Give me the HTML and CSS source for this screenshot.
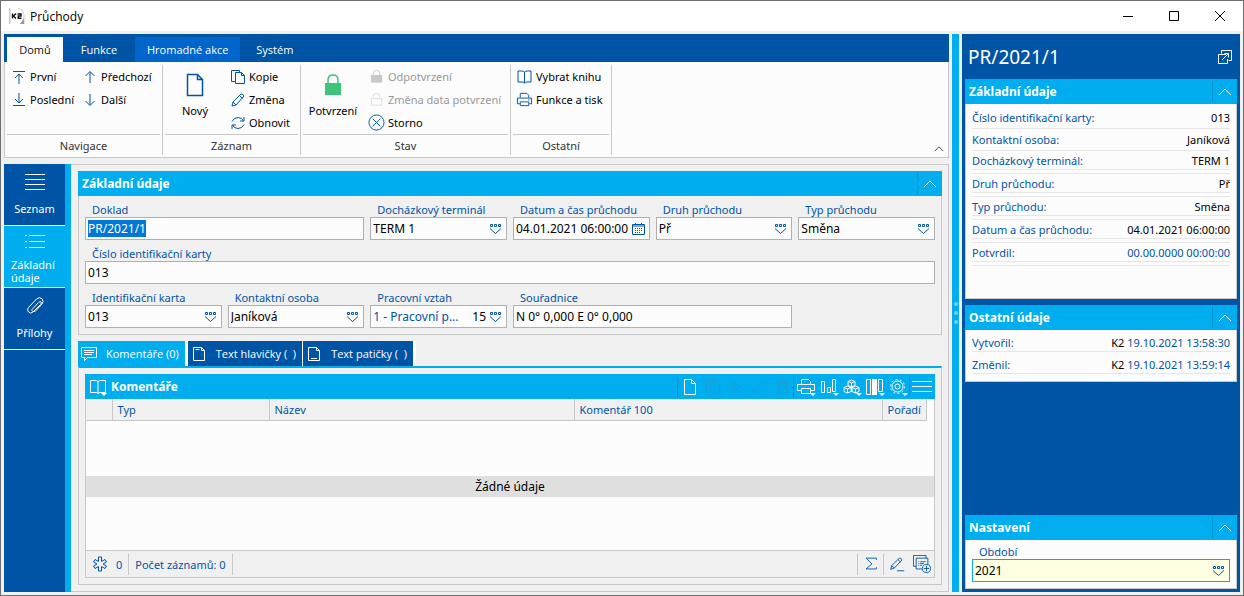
FILE: index.html
```html
<!DOCTYPE html>
<html lang="cs">
<head>
<meta charset="utf-8">
<title>Průchody</title>
<link rel="stylesheet" href="styles.css">
</head>
<body>
<svg class="sprite" aria-hidden="true">
  <symbol id="combo" viewBox="0 0 13 12"><path d="M1.500 1.500h2v2h-2zM5.500 1.500h2v2h-2zM9.500 1.500h2v2h-2zM1 5.500l5.500 5 5.500-5" /></symbol>
  <symbol id="chev" viewBox="0 0 14 8"><path d="M1 7l6-6 6 6" /></symbol>
  <symbol id="page" viewBox="0 0 18 24"><path d="M1.500 1.500h10l5 5v16h-15zM11.500 1.500v5h5" /></symbol>
  <symbol id="copy" viewBox="0 0 14 14"><path d="M4 11.500H.5V.5h8v2M4.500 2.500h6l3 3v8h-9zM10.500 2.500v3h3" /></symbol>
  <symbol id="pencil" viewBox="0 0 14 14"><path d="M1 13l1-4 8-8q2-.5 3 2L5 12zM8.500 2.500l3 3M2 9l3 3" /></symbol>
  <symbol id="book" viewBox="0 0 17 16"><path d="M8.500 3.500Q7.500 2.500 5.500 2.500H2v11h4q1.500 0 2.500 1 1-1 2.500-1h4v-11h-3.500q-2 0-3 1zv11" /></symbol>
  <symbol id="print" viewBox="0 0 18 16"><path d="M4.500 6V1.500h7l2 2V6M4 12.500H1.500v-6h15v6H14M4.500 10.500h9v4h-9zM13 8.500h1.500" /></symbol>
</svg>
<header class="titlebar">
  <svg class="logo" viewBox="0 0 16 16"><path d="M0 0h1.500v16H0z" fill="#c8c8c8"/><path d="M9 0q5 1 6 6v10" fill="none" stroke="#bbb" stroke-width=".8"/><path d="M15 10l-4 6h4z" fill="#999"/><path d="M2 5h12v6H2z" fill="#fff"/><path d="M3.500 5.500v5M7 5.500L4.500 8 7 10.500M8.500 6h3.500v2H9.300v2.200h3.200" fill="none" stroke="#111" stroke-width="1.400"/></svg>
  <h1 class="window-title">Průchody</h1>
  <div class="window-buttons">
    <button aria-label="Minimalizovat"><svg viewBox="0 0 10 10"><path d="M0 5.500h10"/></svg></button>
    <button aria-label="Maximalizovat"><svg viewBox="0 0 10 10"><path d="M.5.5h9v9h-9z"/></svg></button>
    <button aria-label="Zavřít"><svg viewBox="0 0 10 10"><path d="M0 0l10 10M10 0L0 10"/></svg></button>
  </div>
</header>
<div class="app">
  <div class="work">
    <nav class="menu">
      <button class="menu-tab active">Domů</button><button class="menu-tab">Funkce</button><button class="menu-tab hot">Hromadné akce</button><button class="menu-tab">Systém</button>
    </nav>
    <div class="ribbon">
      <section class="group nav-group">
        <div class="tools">
          <div class="stack">
            <button class="tool"><svg viewBox="0 0 14 14"><path d="M1 1.500h12M7 14V4M3 8l4-4 4 4"/></svg>První</button>
            <button class="tool"><svg viewBox="0 0 14 14"><path d="M1 12.500h12M7 0v10M3 6l4 4 4-4"/></svg>Poslední</button>
          </div>
          <div class="stack">
            <button class="tool"><svg viewBox="0 0 14 14"><path d="M7 13V2M2.500 6L7 1.500 11.500 6"/></svg>Předchozí</button>
            <button class="tool"><svg viewBox="0 0 14 14"><path d="M7 1v11M2.500 8L7 12.500 11.500 8"/></svg>Další</button>
          </div>
        </div>
        <h2 class="group-name">Navigace</h2>
      </section>
      <section class="group rec-group">
        <div class="tools">
          <button class="big"><svg class="bold" viewBox="0 0 18 24"><use href="#page"/></svg>Nový</button>
          <div class="stack">
            <button class="tool"><svg viewBox="0 0 14 14"><use href="#copy"/></svg>Kopie</button>
            <button class="tool"><svg viewBox="0 0 14 14"><use href="#pencil"/></svg>Změna</button>
            <button class="tool"><svg viewBox="0 0 14 14"><path d="M1 5.500Q3 1.500 7 1.500q4 0 5.500 3.500M13 1v4H9M13 8.500q-2 4-6 4-4 0-5.500-3.500M1 13V9h4"/></svg>Obnovit</button>
          </div>
        </div>
        <h2 class="group-name">Záznam</h2>
      </section>
      <section class="group state-group">
        <div class="tools">
          <button class="big"><svg viewBox="0 0 18 24"><path d="M1 10h16v12H1z" fill="#3cc47c" stroke="none"/><path d="M4 10V7q0-5 5-5t5 5v3" stroke="#3cc47c" stroke-width="1.500"/></svg>Potvrzení</button>
          <div class="stack">
            <button class="tool" disabled><svg class="wide" viewBox="0 0 18 18"><path d="M3.500 8h11v7h-11z" fill="#c8c8c8" stroke="#c8c8c8"/><path d="M5.500 8V6q0-3.500 3.500-3.500T12.500 6v2" stroke="#c8c8c8"/></svg>Odpotvrzení</button>
            <button class="tool" disabled><svg class="wide" viewBox="0 0 18 18"><path d="M3.500 8h11v7h-11zM5.500 8V6q0-3.500 3.500-3.500T12.500 6v2" stroke="#ddd"/></svg>Změna data potvrzení</button>
            <button class="tool"><svg class="wide" viewBox="0 0 18 18"><circle cx="9" cy="9" r="8"/><path d="M5 5l8 8M13 5l-8 8"/></svg>Storno</button>
          </div>
        </div>
        <h2 class="group-name">Stav</h2>
      </section>
      <section class="group other-group">
        <div class="tools">
          <div class="stack">
            <button class="tool"><svg class="wide" viewBox="0 0 17 16"><use href="#book"/></svg>Vybrat knihu</button>
            <button class="tool"><svg class="wide" viewBox="0 0 18 16"><use href="#print"/></svg>Funkce a tisk</button>
          </div>
        </div>
        <h2 class="group-name">Ostatní</h2>
      </section>
      <button class="collapse" aria-label="Sbalit pás"><svg viewBox="0 0 14 8"><use href="#chev"/></svg></button>
    </div>
    <div class="workspace">
      <nav class="side">
        <button class="side-item"><svg viewBox="0 0 20 20"><path d="M0 2.500h20M0 7.500h20M0 12.500h20M0 17.500h20"/></svg>Seznam</button>
        <button class="side-item active"><svg viewBox="0 0 20 20"><path d="M0 3.500h2M4 3.500h16M0 9.500h2M4 9.500h16M0 15.500h2M4 15.500h16"/></svg><span>Základní údaje</span></button>
        <button class="side-item"><svg viewBox="0 0 20 20"><path d="M7 13.500l6.500-7q1.500-1.500 2.500-.5t-.5 2.500L8 16q-2.500 2-4.500 0t0-4.500L11.500 3q3-2.500 5.500-.3 2.300 2.800 0 5.300L10.500 15q-1.500 1-3 .3-1-1-.5-1.800"/></svg>Přílohy</button>
      </nav>
      <main class="content">
        <section class="panel">
          <div class="panel-head"><h2>Základní údaje</h2><button class="fold" aria-label="Sbalit"><svg viewBox="0 0 14 8"><use href="#chev"/></svg></button></div>
          <form class="fields">
            <div class="field span2"><label for="doc">Doklad</label><div class="box"><input id="doc" value="PR/2021/1"></div></div>
            <div class="field"><label for="term">Docházkový terminál</label><div class="box"><input id="term" value="TERM 1"><button type="button" aria-label="Vybrat"><svg viewBox="0 0 13 12"><use href="#combo"/></svg></button></div></div>
            <div class="field"><label for="date">Datum a čas průchodu</label><div class="box"><input id="date" value="04.01.2021 06:00:00"><button type="button" aria-label="Kalendář"><svg viewBox="0 0 13 12"><path d="M.5 1.500h12v10H.5zM.5 3h12M3.500 0v2M9.500 0v2"/><path d="M3 5.500h8M3 7.500h8M3 9.500h6" stroke-dasharray="1 1"/></svg></button></div></div>
            <div class="field"><label for="kind">Druh průchodu</label><div class="box"><input id="kind" value="Př"><button type="button" aria-label="Vybrat"><svg viewBox="0 0 13 12"><use href="#combo"/></svg></button></div></div>
            <div class="field"><label for="type">Typ průchodu</label><div class="box"><input id="type" value="Směna"><button type="button" aria-label="Vybrat"><svg viewBox="0 0 13 12"><use href="#combo"/></svg></button></div></div>
            <div class="field span6"><label for="num">Číslo identifikační karty</label><div class="box"><input id="num" value="013"></div></div>
            <div class="field"><label for="card">Identifikační karta</label><div class="box"><input id="card" value="013"><button type="button" aria-label="Vybrat"><svg viewBox="0 0 13 12"><use href="#combo"/></svg></button></div></div>
            <div class="field"><label for="person">Kontaktní osoba</label><div class="box"><input id="person" value="Janíková"><button type="button" aria-label="Vybrat"><svg viewBox="0 0 13 12"><use href="#combo"/></svg></button></div></div>
            <div class="field"><label for="rel">Pracovní vztah</label><div class="box"><input id="rel" class="linked" value="1 - Pracovní p..."><output for="rel">15</output><button type="button" aria-label="Vybrat"><svg viewBox="0 0 13 12"><use href="#combo"/></svg></button></div></div>
            <div class="field span2"><label for="gps">Souřadnice</label><div class="box"><input id="gps" value="N 0° 0,000 E 0° 0,000"></div></div>
          </form>
        </section>
        <section class="detail">
          <div class="tabs">
            <button class="tab active"><svg viewBox="0 0 17 16"><path d="M.5 1.500h15v10h-9l-3 3v-3h-3zM3 4.500h10M3 6.500h10M3 8.500h8"/></svg>Komentáře (0)</button>
            <button class="tab"><svg viewBox="0 0 17 16"><path d="M2.500 1.500h8l3 3v10h-11zM10.500 1.500v3h3M4.500 3.500h4"/></svg>Text hlavičky (&nbsp; )</button>
            <button class="tab"><svg viewBox="0 0 17 16"><path d="M2.500 1.500h8l3 3v10h-11zM10.500 1.500v3h3M5 12.500h6"/></svg>Text patičky (&nbsp; )</button>
          </div>
          <div class="detail-body">
            <div class="grid">
              <div class="panel-head">
                <svg class="book" viewBox="0 0 18 18"><path d="M9 3.500Q8 2.500 6 2.500H1.500v12H7q1 0 2 1 1-1 2-1h5.500v-12H12q-2 0-3 1zv12"/><path d="M12 15h6l-3 3z" fill="#fff" stroke="none"/></svg>
                <h2>Komentáře</h2>
                <div class="toolbar">
                  <button aria-label="Nový"><svg viewBox="0 0 20 18"><path d="M4.500 1.500h7l4 4v11h-11zM11.500 1.500v4h4"/></svg></button>
                  <button disabled aria-label="Kopie"><svg viewBox="0 0 18 18"><path d="M5 13.500H2.500v-11h8v2M6.500 4.500h6l3 3v8h-9z"/></svg></button>
                  <button disabled aria-label="Spustit"><svg viewBox="0 0 18 18"><path d="M5.500 4l8 5-8 5z"/></svg></button>
                  <button disabled aria-label="Změna"><svg viewBox="0 0 18 18"><path d="M3 15l1-3.500 8-8q2-.5 3 2l-8.500 8.500zM4 11.500l2.500 2.500"/></svg></button>
                  <button disabled aria-label="Smazat"><svg viewBox="0 0 18 18"><path d="M4 4.500h10M5.500 4.500v11h8v-11M7.500 4V2.500h4V4M8 7v6M11 7v6"/></svg></button>
                  <button class="ruled" aria-label="Tisk"><svg viewBox="0 0 20 18"><path d="M5.500 6V1.500h7l2 2V6M5 12.500H1.500v-6h17v6H15M5.500 10.500h9v5h-9z"/><path d="M14 15h6l-3 3z" fill="#fff" stroke="none"/></svg></button>
                  <button aria-label="Grafy"><svg viewBox="0 0 20 18"><path d="M2.500 3.500h3v11h-3zM8.500 9.500h3v5h-3zM13.500 1.500h3v12h-3z"/><path d="M14 15h6l-3 3z" fill="#fff" stroke="none"/></svg></button>
                  <button aria-label="OLAP"><svg viewBox="0 0 20 18"><path d="M9.500 2l3.500 1.500v4L9.500 9 6 7.500v-4zM6 3.500L9.500 5 13 3.500M9.500 5v9M5.500 8L9 9.500v4L5.500 15 2 13.500v-4zM2 9.500L5.500 11 9 9.500M5.500 11v4M13.500 8l3.500 1.500v4L13.500 15 10 13.500v-4zM10 9.500l3.500 1.500L17 9.500M13.500 11v4"/><path d="M14 15h6l-3 3z" fill="#fff" stroke="none"/></svg></button>
                  <button aria-label="Sloupce"><svg viewBox="0 0 20 18"><path d="M1.500 1.500h4v15h-4zM13.500 1.500h4v12h-4z"/><path d="M7 1h5v16H7zM14 15h6l-3 3z" fill="#fff" stroke="none"/></svg></button>
                  <button aria-label="Nastavení"><svg viewBox="0 0 20 18"><circle cx="9.500" cy="8.500" r="5.500"/><circle cx="9.500" cy="8.500" r="2.500"/><circle cx="9.500" cy="8.500" r="7" stroke-dasharray="2 2.400"/><path d="M14 15h6l-3 3z" fill="#fff" stroke="none"/></svg></button>
                  <button class="ruled" aria-label="Menu"><svg viewBox="0 0 20 18"><path d="M0 3.500h20M0 8.500h20M0 13.500h20"/></svg></button>
                </div>
              </div>
              <table>
                <colgroup><col class="c-mark"><col class="c-type"><col class="c-name"><col><col class="c-order"><col class="c-end"></colgroup>
                <thead><tr><th></th><th>Typ</th><th>Název</th><th>Komentář 100</th><th>Pořadí</th><th></th></tr></thead>
                <tbody><tr><td colspan="6"><p class="empty">Žádné údaje</p></td></tr></tbody>
              </table>
              <footer class="status">
                <span class="cell"><svg viewBox="0 0 16 16"><path d="M6.500 1h3v4.500L13 3.500l1.500 2.500L11 8l3.500 2-1.500 2.500-3.500-2V15h-3v-4.500L3 12.500 1.500 10 5 8 1.500 6 3 3.500l3.500 2z"/></svg>0</span>
                <span class="cell">Počet záznamů: 0</span>
                <button class="sum" aria-label="Součet"><svg viewBox="0 0 20 18"><path d="M16 4.500V2.500H4.500L11 9l-6.500 5.500H16v-2"/></svg></button>
                <button aria-label="Upravit"><svg viewBox="0 0 20 18"><path d="M3 15l1-4 8.500-8.500q2-.5 3 2L7 13.500zM11 4l3 3M4 11l3 2.500M10 16.500h8"/></svg></button>
                <button aria-label="Přidat"><svg viewBox="0 0 20 20"><path d="M3.500 12.500h-3v-12h14v3M10 15.500H3.500v-12h13v7M6 7.500h1M8 7.500h6M6 9.500h1M8 9.500h4M6 11.500h1M8 11.500h2M15 12v6M12 15h6"/><circle cx="15" cy="15" r="4.500"/></svg></button>
              </footer>
            </div>
          </div>
        </section>
      </main>
    </div>
  </div>
  <div class="splitter"><i></i><i></i><i></i></div>
  <aside class="preview">
    <div class="preview-title"><h2>PR/2021/1</h2><button aria-label="Otevřít"><svg viewBox="0 0 14 14"><path d="M3.500 3.500V.5h10v10h-3M8 4.500H.5v9h9V9M4 10l6-6M6.500 3.500h4v4"/></svg></button></div>
    <section class="card basic">
      <div class="panel-head"><h2>Základní údaje</h2><button class="fold" aria-label="Sbalit"><svg viewBox="0 0 14 8"><use href="#chev"/></svg></button></div>
      <dl>
        <div><dt>Číslo identifikační karty:</dt><dd>013</dd></div>
        <div><dt>Kontaktní osoba:</dt><dd>Janíková</dd></div>
        <div class="double"><dt>Docházkový terminál:</dt><dd>TERM 1</dd></div>
        <div class="double"><dt>Druh průchodu:</dt><dd>Př</dd></div>
        <div class="double"><dt>Typ průchodu:</dt><dd>Směna</dd></div>
        <div class="double"><dt>Datum a čas průchodu:</dt><dd>04.01.2021 06:00:00</dd></div>
        <div class="double"><dt>Potvrdil:</dt><dd><time>00.00.0000 00:00:00</time></dd></div>
      </dl>
    </section>
    <section class="card">
      <div class="panel-head"><h2>Ostatní údaje</h2><button class="fold" aria-label="Sbalit"><svg viewBox="0 0 14 8"><use href="#chev"/></svg></button></div>
      <dl class="tight">
        <div><dt>Vytvořil:</dt><dd>K2 <time>19.10.2021 13:58:30</time></dd></div>
        <div><dt>Změnil:</dt><dd>K2 <time>19.10.2021 13:59:14</time></dd></div>
      </dl>
    </section>
    <section class="card settings">
      <div class="panel-head"><h2>Nastavení</h2><button class="fold" aria-label="Sbalit"><svg viewBox="0 0 14 8"><use href="#chev"/></svg></button></div>
      <div class="field"><label for="period">Období</label><div class="box"><input id="period" value="2021"><button type="button" aria-label="Vybrat"><svg viewBox="0 0 13 12"><use href="#combo"/></svg></button></div></div>
    </section>
  </aside>
</div>
<script src="app.js"></script>
</body>
</html>
```
FILE: app.js
```js
const doc = document.getElementById("doc");
doc.focus();
doc.select();
```
FILE: styles.css
```css
:root { --blue: #0054a6; --cyan: #00adef; --gray: #f0f0f0; --line: #c8c8c8; --paper: #fcfcfc; }
* { box-sizing: border-box; }
body { margin: 0; min-height: 100vh; display: flex; flex-direction: column; background: var(--gray); border: 1px solid #6e6e6e; font-family: "Noto Sans", "Open Sans", sans-serif; font-size: 11px; color: #000; }
h1, h2, p, dl, dd { margin: 0; font-size: inherit; font-weight: normal; }
button { margin: 0; padding: 0; border: 0; background: none; font: inherit; color: inherit; }
input { font: inherit; }
svg { display: block; fill: none; stroke: currentColor; flex: none; }
.sprite { position: absolute; width: 0; height: 0; }

.titlebar { display: flex; align-items: center; height: 30px; padding-left: 8px; background: #fff; }
.logo { width: 16px; height: 16px; stroke: none; margin-right: 5px; }
.window-title { font-size: 12px; font-family: "Open Sans", sans-serif; }
.window-buttons { display: flex; margin-left: auto; }
.window-buttons button { display: grid; place-items: center; width: 46px; height: 30px; }
.window-buttons svg { width: 10px; height: 10px; }

.app { flex: 1; display: flex; gap: 3px; padding: 3px; }
.work { flex: 1; min-width: 0; display: flex; flex-direction: column; }
.menu { display: flex; height: 28px; padding: 3px 3px 0; background: var(--blue); color: #fff; font-family: "Open Sans", sans-serif; }
.menu-tab { padding: 0 12px; min-width: 56px; }
.menu-tab:nth-child(2) { min-width: 72px; }
.menu-tab.active { background: var(--paper); color: #111; }
.menu-tab.hot { background: #0066cc; min-width: 105px; }
.menu-tab:last-child { min-width: 69px; }

.ribbon { display: flex; height: 96px; background: var(--paper); border: 1px solid var(--line); border-top: 0; }
.group { display: flex; flex-direction: column; margin: 3px 0 2px; border-right: 1px solid var(--line); }
.nav-group { width: 158px; }
.rec-group { width: 138px; }
.state-group { width: 210px; }
.other-group { width: 101px; }
.tools { display: flex; height: 70px; margin: 0 2px; border-bottom: 1px solid var(--line); }
.nav-group .tools { gap: 9px; padding-left: 5px; }
.stack { display: flex; flex-direction: column; }
.tool { display: flex; align-items: center; gap: 4px; height: 23px; white-space: nowrap; }
.tool svg { width: 14px; height: 14px; color: var(--blue); }
.tool svg.wide { width: 17px; height: 17px; }
.tool:disabled { color: #999; }
.big { display: flex; flex-direction: column; align-items: center; gap: 6px; padding-top: 8px; width: 60px; }
.rec-group .stack { margin-left: 6px; }
.state-group .stack { margin-left: 5px; }
.other-group .stack { margin-left: 3px; }
.state-group .tool, .other-group .tool { gap: 3px; }
.big svg { width: 18px; height: 24px; color: var(--blue); }
.bold { stroke-width: 1.5; }
.group-name { margin: auto; color: #333; }
.collapse { align-self: flex-end; margin: 0 4px 5px auto; }
.collapse svg { width: 10px; height: 6px; }

.workspace { flex: 1; display: flex; margin-top: 6px; }
.side { width: 67px; border-right: 6px solid var(--cyan); background: var(--blue); color: #fff; }
.side-item { display: flex; flex-direction: column; align-items: center; width: 100%; height: 62px; padding-top: 8px; gap: 10px; border-bottom: 1px solid #fff; line-height: 13px; }
.side-item svg { width: 20px; height: 20px; }
.side-item.active { background: var(--cyan); gap: 6px; padding: 6px 7px 0; }
.side-item span { text-align: left; width: 100%; }
.content { flex: 1; min-width: 0; display: flex; flex-direction: column; gap: 6px; padding: 6px; border: 1px solid var(--line); border-left: 0; padding-left: 7px; }

.panel { border: 1px solid var(--line); border-top: 0; }
.panel-head { display: flex; align-items: center; height: 25px; margin: 0 -1px; background: var(--cyan); color: #fff; }
.panel-head h2 { flex: 1; padding-left: 4px; font-size: 12px; font-weight: bold; }
.fold { display: grid; place-items: center; width: 25px; height: 21px; border-left: 1px solid #0090cc; }
.fold svg { width: 14px; height: 8px; }
.fields { display: grid; grid-template-columns: repeat(6, minmax(0, 1fr)); column-gap: 6px; padding: 0 6px 6px; }
.span2 { grid-column: span 2; }
.span6 { grid-column: span 6; }
.field { min-width: 0; }
.field label { display: block; height: 21px; padding: 7px 7px 0; line-height: 14px; color: var(--blue); white-space: nowrap; }
.box { display: flex; align-items: center; height: 23px; padding: 0 4px 0 2px; border: 1px solid #b0b0b0; background: var(--paper); font-size: 12px; }
.box input { flex: 1; min-width: 0; width: 0; padding: 0; border: 0; outline: 0; background: none; color: #000; }
.box input.linked { color: var(--blue); }
.box input::selection { background: #0078d7; color: #fff; }
.box button { color: var(--blue); margin-left: 3px; }
.box svg { width: 13px; height: 12px; }

.detail { flex: 1; display: flex; flex-direction: column; }
.tabs { display: flex; height: 25px; font-family: "Open Sans", sans-serif; }
.tab { display: flex; align-items: center; gap: 8px; padding: 0 6px 0 3px; background: var(--blue); color: #fff; border-right: 1px solid #fff; }
.tab.active { background: var(--cyan); border-right: 3px solid #fff; }
.tab:last-child { border-right: 3px solid #fff; }
.tab svg { width: 17px; height: 16px; }
.detail-body { flex: 1; display: flex; padding: 6px; border: 1px solid var(--line); border-top: 2px solid var(--cyan); }
.grid { flex: 1; display: flex; flex-direction: column; border: 1px solid var(--line); border-top: 0; background: var(--paper); }
.book { width: 18px; height: 18px; margin-left: 4px; }
.toolbar { display: flex; align-items: center; height: 21px; padding-right: 2px; border-left: 1px solid #0090cc; }
.toolbar button { display: grid; place-items: center; width: 23px; height: 21px; }
.toolbar svg { width: 20px; height: 18px; }
.toolbar :disabled { color: #159fd8; }
.toolbar .ruled { width: 24px; border-left: 1px solid #0090cc; }
.grid table { border-collapse: collapse; table-layout: fixed; width: 100%; }
.c-mark { width: 26px; } .c-type { width: 157px; } .c-name { width: 305px; } .c-order { width: 44px; } .c-end { width: 8px; }
.grid th { height: 21px; padding: 0 5px; text-align: left; font-weight: normal; color: var(--blue); background: var(--gray); border-right: 1px solid var(--line); border-bottom: 1px solid var(--line); white-space: nowrap; }
.grid th:last-child { background: var(--paper); border: 0; }
.grid td { padding: 55px 0 0; }
.empty { line-height: 21px; background: #dfdfdf; text-align: center; font-size: 12px; }
.status { display: flex; align-items: center; height: 27px; margin-top: auto; background: var(--gray); border-top: 1px solid var(--line); color: var(--blue); }
.cell { display: flex; align-items: center; gap: 8px; height: 21px; padding: 0 6px; border-right: 1px solid var(--line); }
.cell svg { width: 16px; height: 16px; }
.status button { display: grid; place-items: center; width: 25px; height: 21px; }
.status button svg { width: 18px; height: 18px; }
.status .sum { width: 27px; margin-left: auto; border: solid var(--line); border-width: 0 1px; }

.splitter { display: flex; flex-direction: column; justify-content: center; align-items: center; gap: 5px; width: 7px; background: var(--cyan); }
.splitter i { width: 4px; height: 4px; border-radius: 50%; background: #6dd0f7; }

.preview { display: flex; flex-direction: column; gap: 6px; width: 278px; padding: 0 3px 3px; background: var(--blue); }
.preview-title { display: flex; align-items: center; justify-content: space-between; height: 45px; margin-bottom: -6px; padding: 0 5px 0 3px; color: #fff; }
.preview-title h2 { font-size: 19px; }
.preview-title svg { width: 14px; height: 14px; }
.card { border: 1px solid var(--line); border-top: 0; background: var(--paper); }
.basic { min-height: 220px; }
.settings { margin-top: auto; }
.card dl { padding: 3px 6px 0; }
.card dl.tight { padding: 0 6px 7px; }
.card dl > div { display: flex; justify-content: space-between; align-items: center; height: 22px; border-bottom: 1px solid #e6e6e6; }
.card dl.tight > div { padding-top: 4px; }
.card dl > .double { height: 19px; margin-bottom: 4px; box-shadow: 0 3px #fcfcfc, 0 4px #e6e6e6; }
.card dt, .card time { color: var(--blue); }
.settings .field { padding: 0 6px 6px; }
.settings .field label { height: 19px; padding-top: 5px; }
.settings .box { background: #ffffe1; border-color: var(--cyan); }
```
